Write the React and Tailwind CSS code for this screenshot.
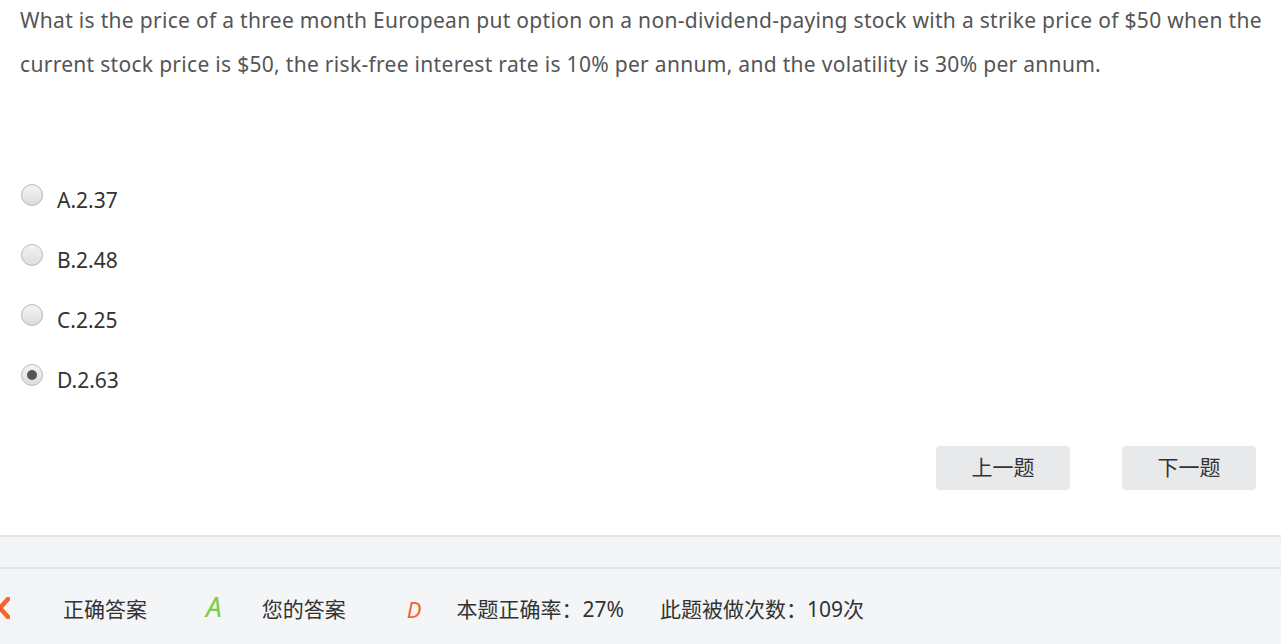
import React, { useState } from "react";

const options = [
  { key: "A", value: "2.37" },
  { key: "B", value: "2.48" },
  { key: "C", value: "2.25" },
  { key: "D", value: "2.63" },
];

const font = { fontFamily: '"Noto Sans", "Noto Sans CJK SC", sans-serif' };

const Radio = ({ checked }) => (
  <span className="flex h-[22px] w-[22px] shrink-0 items-center justify-center rounded-full border border-[#b9b9b9] bg-gradient-to-b from-[#f4f4f4] to-[#dcdcdc]">
    {checked && <span className="h-[10px] w-[10px] rounded-full bg-[#555]"></span>}
  </span>
);

const App = () => {
  const [selected, setSelected] = useState("D");

  return (
    <div className="flex h-[644px] w-full flex-col overflow-hidden bg-white" style={font}>
      {/* Question */}
      <div className="-mt-[2px] pl-[20px] pr-[8px] text-[21px] leading-[44px] tracking-[0.3px] text-[#555]">
        What is the price of a three month European put option on a non-dividend-paying stock with a strike price of $50 when the current stock price is $50, the risk-free interest rate is 10% per annum, and the volatility is 30% per annum.
      </div>

      {/* Options */}
      <div className="mt-[98px] flex flex-col gap-[38px] pl-[21px]">
        {options.map((o) => (
          <label
            key={o.key}
            className="flex h-[22px] cursor-pointer items-center gap-[14px] text-[21px] text-[#333]"
            onClick={() => setSelected(o.key)}
          >
            <Radio checked={selected === o.key} />
            <span className="mt-[12px]">
              {o.key}.{o.value}
            </span>
          </label>
        ))}
      </div>

      {/* Nav buttons */}
      <div className="mt-[60px] flex justify-end gap-[52px] pr-[25px]">
        <button className="h-[44px] w-[134px] rounded-[4px] bg-[#e8e9eb] text-[21px] text-[#333]">上一题</button>
        <button className="h-[44px] w-[134px] rounded-[4px] bg-[#e8e9eb] text-[21px] text-[#333]">下一题</button>
      </div>

      {/* Bottom area */}
      <div className="mt-[45px] flex flex-1 flex-col bg-[#f4f5f7]">
        <div className="h-[2px] bg-[#e4e5e7]"></div>
        <div className="h-[30px]"></div>
        <div className="h-[2px] bg-[#e4e5e7]"></div>
        <div className="flex flex-1 items-center pt-[6px] text-[21px] text-[#333]">
          <svg width="12" height="22" viewBox="0 0 12 22" className="-mt-[4px] -ml-[2px] shrink-0">
            <polyline points="10,2 2,11 10,20" fill="none" stroke="#f9622a" strokeWidth="4.5" strokeLinecap="round" strokeLinejoin="round" />
          </svg>
          <span className="ml-[53px]">正确答案</span>
          <span className="-mt-[8px] ml-[59px] text-[28px] italic text-[#7ccc4e]">A</span>
          <span className="ml-[40px]">您的答案</span>
          <span className="ml-[61px] text-[22px] italic text-[#f9622a]">D</span>
          <span className="ml-[35px]">本题正确率：27%</span>
          <span className="ml-[36px]">此题被做次数：109次</span>
        </div>
      </div>
    </div>
  );
};

export default App;
